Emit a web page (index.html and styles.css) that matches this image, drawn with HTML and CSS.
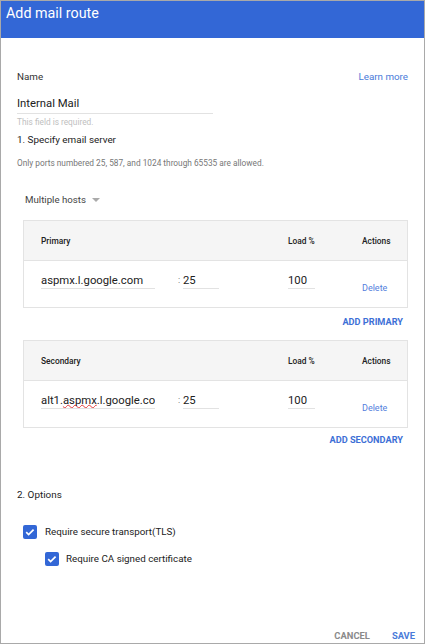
FILE: index.html
```html
<!DOCTYPE html>
<html>
<head>
<meta charset="utf-8">
<link rel="stylesheet" href="styles.css">
</head>
<body>
<div class="dialog">
  <header class="dialog-header">
    <h1 class="dialog-title">Add mail route</h1>
  </header>
  <main class="dialog-body">
    <div class="name-row">
      <span class="field-label">Name</span>
      <a class="link">Learn more</a>
    </div>
    <div class="text-field name-field">Internal Mail</div>
    <div class="hint">This field is required.</div>
    <h2 class="section-title">1. Specify email server</h2>
    <p class="note">Only ports numbered 25, 587, and 1024 through 65535 are allowed.</p>
    <div class="select">Multiple hosts <span class="caret"></span></div>

    <div class="host-table">
      <div class="ht-head">
        <span>Primary</span><span></span><span>Load %</span><span>Actions</span>
      </div>
      <div class="ht-row">
        <div class="text-field host-field">aspmx.l.google.com</div>
        <div class="port-cell"><span class="colon">:</span><div class="text-field port-field">25</div></div>
        <div class="text-field load-field">100</div>
        <a class="delete">Delete</a>
      </div>
    </div>
    <div class="add-link add-primary">ADD PRIMARY</div>

    <div class="host-table">
      <div class="ht-head">
        <span>Secondary</span><span></span><span>Load %</span><span>Actions</span>
      </div>
      <div class="ht-row">
        <div class="text-field host-field">alt1.<span class="misspelled">aspmx</span>.l.google.co</div>
        <div class="port-cell"><span class="colon">:</span><div class="text-field port-field">25</div></div>
        <div class="text-field load-field">100</div>
        <a class="delete">Delete</a>
      </div>
    </div>
    <div class="add-link add-secondary">ADD SECONDARY</div>

    <h2 class="section-title options-title">2. Options</h2>
    <label class="checkbox cb-tls">
      <span class="box"><svg viewBox="0 0 14 14" width="14" height="14"><path d="M3.2 7.2l2.4 2.4 5-5" fill="none" stroke="#fff" stroke-width="1.7"/></svg></span>
      <span>Require secure transport(TLS)</span>
    </label>
    <label class="checkbox cb-ca">
      <span class="box"><svg viewBox="0 0 14 14" width="14" height="14"><path d="M3.2 7.2l2.4 2.4 5-5" fill="none" stroke="#fff" stroke-width="1.7"/></svg></span>
      <span>Require CA signed certificate</span>
    </label>
  </main>
  <footer class="dialog-footer">
    <a class="btn btn-cancel">CANCEL</a>
    <a class="btn btn-save">SAVE</a>
  </footer>
</div>
</body>
</html>
```
FILE: styles.css
```css
* { box-sizing: border-box; }
html, body { margin: 0; padding: 0; background: #fff; }
body { font-family: Roboto, "Noto Sans", sans-serif; color: #212121; }

.dialog {
  width: 425px;
  height: 644px;
  border: 1px solid #a9a9a9;
  display: flex;
  flex-direction: column;
  overflow: hidden;
}

.dialog-header {
  background: #3367d6;
  height: 37px;
  padding: 3px 5px 0;
}
.dialog-title {
  margin: 0;
  font-size: 14.3px;
  font-weight: 400;
  line-height: 18px;
  color: #fff;
}

.dialog-body {
  padding: 30px 16px 0;
  display: flex;
  flex-direction: column;
}

.name-row {
  display: flex;
  justify-content: space-between;
  align-items: center;
  height: 16px;
  font-size: 9.8px;
}
.field-label { color: #333; }
.link { color: #4a7bd9; }

.text-field {
  border-bottom: 1px solid #e2e2e2;
  line-height: 16px;
  color: #212121;
}
.name-field {
  margin-top: 12px;
  width: 196px;
  font-size: 11.3px;
  line-height: 16px;
  padding-bottom: 1px;
}
.hint {
  margin-top: 2px;
  font-size: 8.3px;
  line-height: 12px;
  color: #c0c0c0;
}
.section-title {
  margin: 4px 0 0;
  font-size: 9.9px;
  font-weight: 400;
  line-height: 16px;
  color: #222;
}
.note {
  margin: 9px 0 0;
  font-size: 8.3px;
  line-height: 12px;
  color: #777;
}
.select {
  margin: 23px 0 0 8px;
  font-size: 9.7px;
  line-height: 16px;
  color: #444;
  display: flex;
  align-items: center;
  gap: 6px;
}
.caret {
  width: 0;
  height: 0;
  border-left: 4px solid transparent;
  border-right: 4px solid transparent;
  border-top: 4px solid #aaa;
  margin-top: -1px;
}

.host-table {
  margin: 12px 0 0 6px;
  border: 1px solid #e3e3e3;
}
.ht-head, .ht-row {
  display: grid;
  grid-template-columns: 135px 112px 74px 1fr;
  padding-left: 17px;
}
.ht-head {
  height: 40px;
  align-items: center;
  background: #f5f5f5;
  border-bottom: 1px solid #e3e3e3;
  font-size: 8.4px;
  font-weight: 500;
  color: #212121;
}
.ht-row {
  height: 46px;
  padding-top: 12px;
  align-items: start;
  font-size: 11.3px;
}
.ht-row .text-field { line-height: 15px; }
.host-field { width: 114px; white-space: nowrap; overflow: hidden; }
.port-cell { display: flex; padding-left: 2px; }
.colon { width: 5px; line-height: 15px; color: #666; font-size: 9px; }
.port-field { width: 36px; }
.load-field { width: 27px; }
.delete {
  font-size: 9px;
  color: #5580dd;
  line-height: 16px;
  margin-top: 7px;
}
.misspelled {
  text-decoration: underline wavy #e23b3b;
  text-decoration-thickness: 1px;
  text-underline-offset: 0px;
  text-decoration-skip-ink: none;
}

.add-link {
  align-self: flex-end;
  margin-right: 5px;
  font-size: 9.2px;
  font-weight: 700;
  line-height: 16px;
  color: #3d6fd6;
}
.add-primary { margin-top: 6px; margin-bottom: 10px; }
.add-primary + .host-table { margin-top: 0; }
.add-secondary { margin-top: 4px; }

.options-title { margin-top: 39px; }

.checkbox {
  display: flex;
  align-items: center;
  gap: 8px;
  font-size: 9.8px;
  line-height: 16px;
  color: #222;
}
.box {
  width: 14px;
  height: 14px;
  border-radius: 2px;
  background: #3367d6;
  display: flex;
}
.cb-tls { margin: 21px 0 0 6px; }
.cb-ca { margin: 11px 0 0 28px; gap: 7px; }

.dialog-footer {
  margin-top: auto;
  height: 16px;
  margin-bottom: 0;
  display: flex;
  justify-content: flex-end;
  align-items: center;
  gap: 22px;
  padding-right: 9px;
  font-size: 9.4px;
  font-weight: 700;
}
.btn-cancel { color: #8a8a8a; }
.btn-save { color: #4a7bd9; }
```
